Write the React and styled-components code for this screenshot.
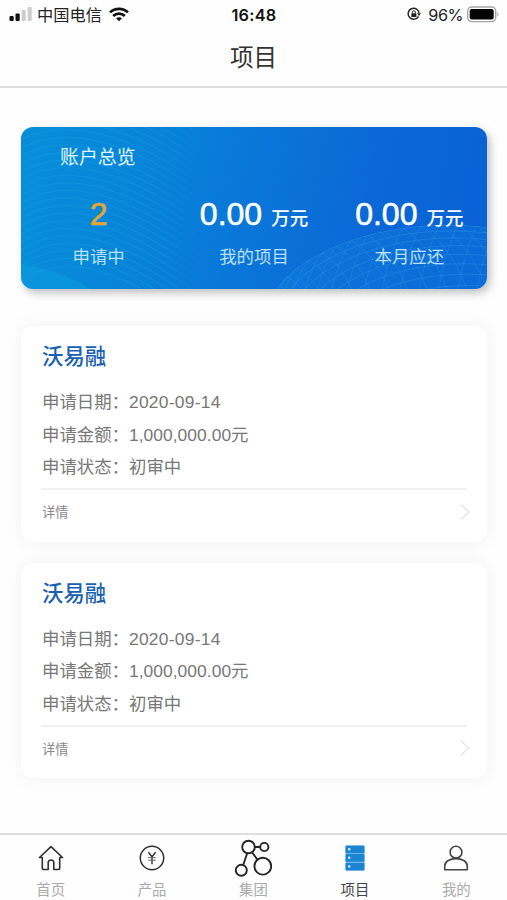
import React from "react";
import styled, { createGlobalStyle } from "styled-components";

const GlobalStyle = createGlobalStyle`
  * { box-sizing: border-box; }
  html, body { margin: 0; background: #fefefe; }
  body { font-family: "Liberation Sans", "Noto Sans CJK SC", sans-serif; }
  svg { display: block; }
`;

const Screen = styled.main`
  width: 100%;
  height: 900px;
  display: flex;
  flex-direction: column;
  overflow: hidden;
`;

const StatusBar = styled.header`
  display: grid;
  grid-template-columns: 1fr auto 1fr;
  align-items: center;
  height: 28px;
  padding: 0 8px 0 9px;
  color: #222;
  font-family: Inter, "Noto Sans CJK SC", sans-serif;
  font-size: 16.3px;
  line-height: 26px;
`;

const StatusGroup = styled.div`
  display: flex;
  align-items: center;
  gap: ${(p) => p.$gap}px;
  justify-content: ${(p) => (p.$end ? "flex-end" : "flex-start")};
`;

const Carrier = styled.span`
  padding-top: 2px;
`;

const Percent = styled.span`
  padding-top: 1px;
  letter-spacing: -0.5px;
`;

const Clock = styled.time`
  padding-top: 1px;
  font-size: 16.3px;
  font-weight: 600;
  color: #111;
  letter-spacing: 0.25px;
`;

const TitleBar = styled.h1`
  margin: 0;
  padding-top: 1px;
  height: 60px;
  border-bottom: 2px solid #dedede;
  font-size: 23.5px;
  font-weight: 400;
  line-height: 58px;
  text-align: center;
  color: #333;
`;

const Content = styled.div`
  flex: 1;
  padding: 39px 20px 0 21px;
`;

const Overview = styled.section`
  position: relative;
  height: 162px;
  padding: 16px 0 0;
  border-radius: 12px;
  overflow: hidden;
  color: #fff;
  background: linear-gradient(102deg, #078fd9 0%, #0784d9 27%, #0a74d8 52%, #0b67d6 76%, #0861d5 100%);
`;

const OverviewShadow = styled.div`
  border-radius: 12px;
  box-shadow: 3px 4px 8px rgba(0, 0, 0, 0.25);
`;

const Pattern = styled.svg`
  position: absolute;
  inset: 0;
`;

const OverviewTitle = styled.h2`
  position: relative;
  margin: 0 0 0 39px;
  font-size: 18.9px;
  font-weight: 400;
  line-height: 29px;
  color: #e0f5ff;
`;

const Stats = styled.div`
  position: relative;
  display: grid;
  grid-template-columns: repeat(3, 1fr);
  margin-top: 21px;
  text-align: center;
`;

const Amount = styled.div`
  height: 42px;
  line-height: 42px;
  font-size: 32px;
  white-space: nowrap;
  color: ${(p) => (p.$accent ? "#e3a62f" : "#fff")};
  -webkit-text-stroke: 0.6px currentColor;
`;

const Unit = styled.span`
  margin-left: 9px;
  font-size: 18.5px;
  font-weight: 500;
  -webkit-text-stroke: 0;
`;

const StatLabel = styled.div`
  margin-top: 9px;
  font-size: 17.4px;
  line-height: 27px;
  color: #b9e1f8;
`;

const ProjectList = styled.div`
  display: grid;
  gap: 21px;
  margin-top: 37px;
`;

const ProjectCard = styled.article`
  height: 215.5px;
  padding: 16px 20px 0 21px;
  border-radius: 12px;
  background: #fff;
  box-shadow: 0 0 20px rgba(0, 0, 0, 0.05);
`;

const ProjectName = styled.h3`
  margin: 0 0 14px;
  font-size: 21.4px;
  font-weight: 500;
  line-height: 30px;
  color: #1860b0;
`;

const Field = styled.div`
  display: flex;
  height: 32.5px;
  font-size: 17.4px;
  line-height: 33px;
  color: #777;
`;

const FieldValue = styled.span`
  letter-spacing: ${(p) => (p.$wide ? "0.28px" : "0.05px")};
`;

const DetailLink = styled.div`
  display: flex;
  align-items: center;
  justify-content: space-between;
  height: 45px;
  margin: 4.5px 0 0 -1px;
  padding-left: 1px;
  border-top: 2px solid #f1f1f1;
  font-size: 13.2px;
  color: #888;
`;

const TabBar = styled.nav`
  display: grid;
  grid-template-columns: repeat(5, 1fr);
  height: 67px;
  padding-top: 1px;
  border-top: 2px solid #dedede;
`;

const Tab = styled.div`
  display: flex;
  flex-direction: column;
  align-items: center;
  font-size: 14.4px;
  line-height: 20px;
  color: ${(p) => (p.$active ? "#444" : "#aaa")};
`;

const TabIcon = styled.div`
  display: flex;
  align-items: center;
  height: 44px;
`;

const SignalIcon = () => (
  <svg width="24" height="16" viewBox="0 0 24 16">
    <rect x="0.5" y="10" width="4.2" height="5" rx="1" fill="#111" />
    <rect x="6.5" y="7.5" width="4.2" height="7.5" rx="1" fill="#111" />
    <rect x="12.7" y="4" width="4" height="11" rx="1" fill="#ccc" />
    <rect x="18.7" y="1" width="4" height="14" rx="1" fill="#ccc" />
  </svg>
);

const WifiIcon = () => (
  <svg width="20" height="15" viewBox="0 0 20 15" fill="none" stroke="#111" strokeWidth="2.7">
    <path d="M1 5.4C6 .6 14 .6 19 5.4" />
    <path d="M4.2 9c3.2-3.1 8.4-3.1 11.6 0" />
    <path d="M7 11.3c1.8-1.5 4.2-1.5 6 0L10 14.3Z" fill="#111" stroke="none" />
  </svg>
);

const LockIcon = () => (
  <svg width="14" height="14" viewBox="0 0 14 14" fill="none" stroke="#222">
    <path d="M11.5 9.3A5.5 5.5 0 1 1 12.1 6" strokeWidth="1.4" />
    <path d="M10 6.3h4l-2 2.8Z" fill="#222" stroke="none" />
    <path d="M5.3 6.5V5.4a1.6 1.6 0 0 1 3.2 0v1.1" strokeWidth="1" />
    <rect x="4.4" y="6.3" width="5" height="3.7" rx=".5" fill="#222" stroke="none" />
  </svg>
);

const BatteryIcon = () => (
  <svg width="32" height="17" viewBox="0 0 32 17">
    <rect x=".7" y="1" width="28" height="14.6" rx="4" fill="#fff" stroke="#a5a5a5" strokeWidth="1.4" />
    <rect x="2.7" y="3" width="24" height="10.6" rx="2" fill="#050505" />
    <path d="M30.4 6.2c1.4.7 1.4 3.5 0 4.2Z" fill="#999" />
  </svg>
);

const waves = Array.from({ length: 26 }, (_, i) => i);
const parallels = Array.from({ length: 9 }, (_, i) => i);

const DOME = { cx: 428, cy: 200, rx: 186, ry: 102 };

// Points along the dome's rim, from its left foot to past its crown.
const rim = Array.from({ length: 22 }, (_, i) => {
  const a = Math.PI * (0.9 - i * 0.032);
  return {
    x: DOME.cx + DOME.rx * Math.cos(a),
    y: DOME.cy - DOME.ry * Math.sin(a),
  };
});

const OverviewPattern = () => (
  <Pattern width="466" height="162" viewBox="0 0 466 162" fill="none">
    <defs>
      <linearGradient id="waveFade" gradientUnits="userSpaceOnUse" x1="0" y1="0" x2="190" y2="0">
        <stop offset="0" stopColor="#35b4e2" stopOpacity=".16" />
        <stop offset=".7" stopColor="#35b4e2" stopOpacity=".22" />
        <stop offset="1" stopColor="#35b4e2" stopOpacity="0" />
      </linearGradient>
      <clipPath id="dome">
        <ellipse {...DOME} />
      </clipPath>
    </defs>
    {waves.map((i) => (
      <path
        key={i}
        d={`M-6 ${i * 8 - 40}C45 ${i * 7 - 62} 115 ${i * 8 - 48} 190 ${i * 8 + 8}`}
        stroke="url(#waveFade)"
        strokeWidth="0.9"
      />
    ))}
    <path d="M0 137Q38 143 70 162H0Z" fill="#12a5e5" opacity=".35" />
    <g clipPath="url(#dome)" stroke="#3fa9f0" strokeWidth=".8">
      <ellipse {...DOME} fill="#1487e4" fillOpacity=".25" strokeOpacity=".5" />
      {parallels.map((i) => (
        <ellipse
          key={i}
          cx={DOME.cx + i * 3}
          cy={DOME.cy + i * 2}
          rx={DOME.rx - i * 9}
          ry={DOME.ry - i * (3.5 + i * 0.45)}
          strokeOpacity=".36"
        />
      ))}
      {rim.map(({ x, y }, i) => (
        <g key={i} strokeOpacity=".28">
          <path d={`M${x} ${y}q${24 + i} ${12 + i} ${38 + i} 74`} />
          <path d={`M${x} ${y}q${-18 + i * 0.5} 20 ${-28 + i * 0.5} 72`} />
        </g>
      ))}
    </g>
  </Pattern>
);

const ChevronIcon = () => (
  <svg width="8" height="18" viewBox="0 0 8 18" fill="none" stroke="#e4e4e4" strokeWidth="1.3" overflow="visible">
    <path d="m1.5 1.5 8.5 7.5-8.5 7.5" />
  </svg>
);

const HomeIcon = () => (
  <svg width="26" height="26" viewBox="0 0 26 26" fill="none" stroke="#303030" strokeWidth="1.6" strokeLinejoin="round" strokeLinecap="round">
    <path d="M4.3 12.5H1.5L13 1.6l11.5 10.9h-2.8v10.8q0 1.2-1.2 1.2h-4.7v-6.8q0-2.7-2.8-2.7t-2.8 2.7v6.8H5.5q-1.2 0-1.2-1.2Z" />
  </svg>
);

const YenIcon = () => (
  <svg width="26" height="26" viewBox="0 0 26 26" fill="none" stroke="#303030">
    <circle cx="13" cy="13" r="11.7" strokeWidth="1.5" />
    <path d="m9.4 7.3 3.6 4.5 3.6-4.5M13 11.8v7.4" strokeWidth="1.4" />
    <path d="M9.2 12.6h7.6M9.2 15.2h7.6" strokeWidth="1" stroke="#666" />
  </svg>
);

const GroupIcon = () => (
  <svg width="38" height="38" viewBox="0 0 38 38" fill="none" stroke="#252525" strokeWidth="1.9">
    <circle cx="14.5" cy="8" r="6.3" />
    <circle cx="30.3" cy="8" r="4.1" />
    <circle cx="7.3" cy="31.2" r="5.5" />
    <circle cx="28.8" cy="27.2" r="8.4" />
    <path d="M20.8 8h5.4M13.2 14.2 9.2 26M18 13.3l5.4 7.3" />
  </svg>
);

const ServerIcon = () => (
  <svg width="20" height="26" viewBox="0 0 20 26">
    <rect x=".5" y=".8" width="19" height="24.6" rx="1" fill="#8cc4ec" />
    {[0.5, 9.1, 17.7].map((y) => (
      <g key={y}>
        <rect x=".5" y={y} width="19" height="7.7" rx="1" fill="#1c85d3" />
        <circle cx="4.2" cy={y + 3.7} r="1.2" fill="#e8f6ff" />
      </g>
    ))}
  </svg>
);

const UserIcon = () => (
  <svg width="26" height="26" viewBox="0 0 26 26" fill="none" stroke="#444" strokeWidth="1.6">
    <circle cx="13" cy="7.2" r="5.9" />
    <path d="M1.7 24.7V21c0-9.8 22.6-9.8 22.6 0v3.7Z" strokeLinejoin="round" />
  </svg>
);

const stats = [
  { value: "2", label: "申请中", accent: true },
  { value: "0.00", unit: "万元", label: "我的项目" },
  { value: "0.00", unit: "万元", label: "本月应还" },
];

const project = {
  name: "沃易融",
  fields: [
    { label: "申请日期：", value: "2020-09-14", wide: true },
    { label: "申请金额：", value: "1,000,000.00元" },
    { label: "申请状态：", value: "初审中" },
  ],
};
const projects = [{ id: 1, ...project }, { id: 2, ...project }];

const tabs = [
  { label: "首页", Icon: HomeIcon },
  { label: "产品", Icon: YenIcon },
  { label: "集团", Icon: GroupIcon },
  { label: "项目", Icon: ServerIcon, active: true },
  { label: "我的", Icon: UserIcon },
];

export default function App() {
  return (
    <Screen>
      <GlobalStyle />
      <StatusBar>
        <StatusGroup $gap={4}>
          <SignalIcon />
          <StatusGroup $gap={7}>
            <Carrier>中国电信</Carrier>
            <WifiIcon />
          </StatusGroup>
        </StatusGroup>
        <Clock>16:48</Clock>
        <StatusGroup $gap={4} $end>
          <StatusGroup $gap={7}>
            <LockIcon />
            <Percent>96%</Percent>
          </StatusGroup>
          <BatteryIcon />
        </StatusGroup>
      </StatusBar>
      <TitleBar>项目</TitleBar>
      <Content>
        <OverviewShadow>
          <Overview>
            <OverviewPattern />
            <OverviewTitle>账户总览</OverviewTitle>
            <Stats>
              {stats.map((s) => (
                <div key={s.label}>
                  <Amount $accent={s.accent}>
                    {s.value}
                    {s.unit && <Unit>{s.unit}</Unit>}
                  </Amount>
                  <StatLabel>{s.label}</StatLabel>
                </div>
              ))}
            </Stats>
          </Overview>
        </OverviewShadow>
        <ProjectList>
          {projects.map((p) => (
            <ProjectCard key={p.id}>
              <ProjectName>{p.name}</ProjectName>
              {p.fields.map(({ label, value, wide }) => (
                <Field key={label}>
                  <span>{label}</span>
                  <FieldValue $wide={wide}>{value}</FieldValue>
                </Field>
              ))}
              <DetailLink>
                <span>详情</span>
                <ChevronIcon />
              </DetailLink>
            </ProjectCard>
          ))}
        </ProjectList>
      </Content>
      <TabBar>
        {tabs.map(({ label, Icon, active }) => (
          <Tab key={label} $active={active}>
            <TabIcon>
              <Icon />
            </TabIcon>
            <span>{label}</span>
          </Tab>
        ))}
      </TabBar>
    </Screen>
  );
}
